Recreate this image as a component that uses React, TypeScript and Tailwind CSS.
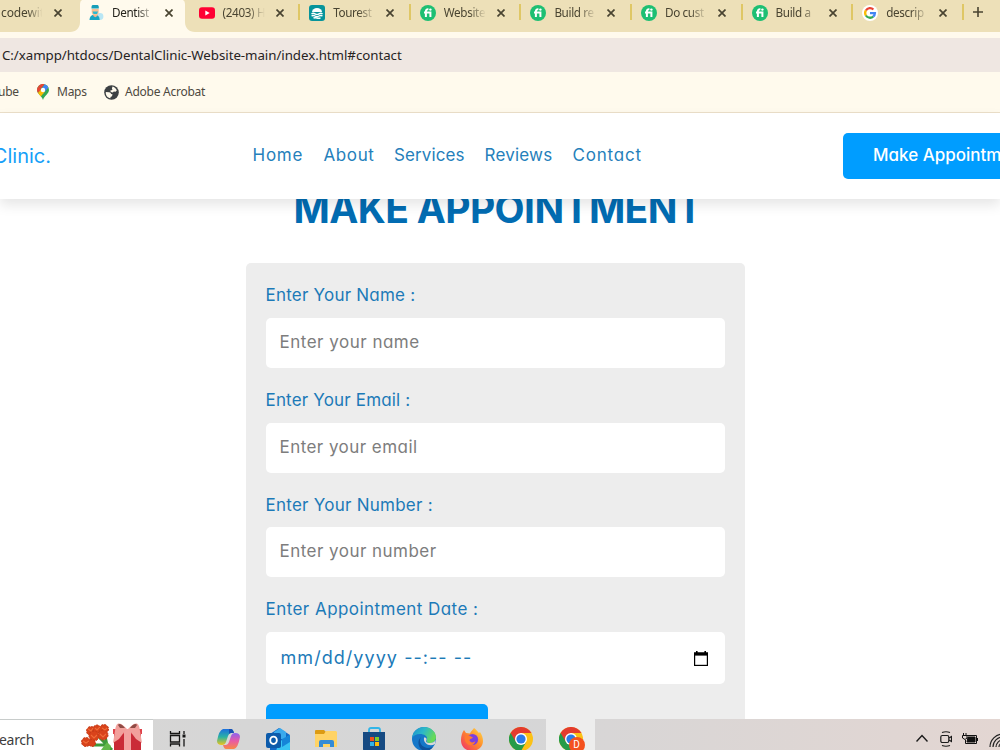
import React from 'react';

const tabs = [
  { icon: 'dentist', title: 'Dentist', active: true },
  { icon: 'youtube', title: '(2403) H', active: false },
  { icon: 'tourest', title: 'Tourest', active: false },
  { icon: 'fiverr', title: 'Website', active: false },
  { icon: 'fiverr', title: 'Build re', active: false },
  { icon: 'fiverr', title: 'Do cust', active: false },
  { icon: 'fiverr', title: 'Build a', active: false },
  { icon: 'google', title: 'descrip', active: false },
];

const fields = [
  { label: 'Enter Your Name :', placeholder: 'Enter your name', labelClass: 'tracking-[0.22px]', inputClass: 'placeholder:tracking-[0.5px]' },
  { label: 'Enter Your Email :', placeholder: 'Enter your email', labelClass: 'tracking-[0.17px]', inputClass: 'placeholder:tracking-[0.45px]' },
  { label: 'Enter Your Number :', placeholder: 'Enter your number', labelClass: 'tracking-[0.25px]', inputClass: 'placeholder:tracking-[0.47px]' },
];

const navLinks = [
  { name: 'Home', className: 'w-[71px] tracking-[0.75px]' },
  { name: 'About', className: 'w-[70.5px] tracking-[0.6px]' },
  { name: 'Services', className: 'w-[90.5px] tracking-[0.1px]' },
  { name: 'Reviews', className: 'w-[88px] tracking-[0.2px]' },
  { name: 'Contact', className: 'w-[70px] tracking-[0.8px]' },
];

const CloseIcon = () => (
  <svg className="w-2 h-2 shrink-0" viewBox="0 0 8 8" fill="none" stroke="currentColor" strokeWidth="1.7">
    <path d="M.5.5l7 7M7.5.5l-7 7" />
  </svg>
);

const GoogleIcon = () => (
  <svg className="w-4 h-4" viewBox="0 0 16 16">
    <circle cx="8" cy="8" r="8" fill="#fff" />
    <g fill="none" strokeWidth="2.3">
      <path d="M3.9 5.5A4.9 4.9 0 0 1 11.4 4.5" stroke="#ea4335" />
      <path d="M3.9 5.4a5 5 0 0 0 0 5.2" stroke="#fbbc05" />
      <path d="M3.9 10.5a4.9 4.9 0 0 0 7.3 1.1" stroke="#34a853" />
      <path d="M8 8.1h4.9a4.8 4.8 0 0 1-1.7 3.5" stroke="#4285f4" />
    </g>
  </svg>
);

const ChromeIcon = () => (
  <svg className="w-6 h-6" viewBox="0 0 24 24">
    <circle cx="12" cy="12" r="12" fill="#fbc116" />
    <path d="M12 12L1.6 6A12 12 0 0 0 12 24l5.2-9z" fill="#259b4a" />
    <path d="M1.6 6A12 12 0 0 1 22.4 6H12l-5 9z" fill="#e33b2e" />
    <circle cx="12" cy="12" r="6" fill="#fff" />
    <circle cx="12" cy="12" r="4.6" fill="#2a7be9" />
  </svg>
);

const Favicon = ({ name }: { name: string }) => {
  if (name === 'dentist') {
    return (
      <svg className="w-4 h-4" viewBox="0 0 16 16">
        <circle cx="12" cy="11.5" r="3.4" fill="#b9e6f4" />
        <path d="M1.5 15c0-3.5 2-5.2 5.2-5.2s5 1.7 5 5.2z" fill="#16a5c4" />
        <path d="M5.3 8h4v3l-2 1.3-2-1.3z" fill="#f3b48b" />
        <path d="M3.7 4h7v2.7a3.5 3.5 0 0 1-7 0z" fill="#f7be94" />
        <path d="M3.5 3.6V2A3.6 2.5 0 0 1 10.8 2v1.6z" fill="#179eb9" />
        <path d="M4.5 6.5h5.5l-1 2.5H5.5z" fill="#2bb9d2" />
      </svg>
    );
  }
  if (name === 'youtube') {
    return (
      <svg className="w-4 h-4" viewBox="0 0 16 16">
        <rect y="2.2" width="16" height="11.6" rx="3" fill="#f03" />
        <path d="M6.3 5.5v5L10.7 8z" fill="#fff" />
      </svg>
    );
  }
  if (name === 'tourest') {
    return (
      <svg className="w-4 h-4" viewBox="0 0 16 16">
        <rect width="16" height="16" rx="3" fill="#07949b" />
        <path d="M3 7a5 4 0 0 1 10 0z" fill="#fff" />
        <g fill="none" stroke="#fff" strokeWidth="1.4">
          <path d="M2.5 8.8c1.3-.8 2.3-.8 3.5 0s2.8.8 4 0 2.3-.8 3.5 0" />
          <path d="M2.5 11c1.3-.8 2.3-.8 3.5 0s2.8.8 4 0 2.3-.8 3.5 0" />
          <path d="M4.5 13c1.2-.5 2.2-.4 3.5 0s2.3.3 3.5 0" />
        </g>
      </svg>
    );
  }
  if (name === 'fiverr') {
    return (
      <svg className="w-4 h-4" viewBox="0 0 16 16">
        <circle cx="8" cy="8" r="8" fill="#1dbf73" />
        <path d="M5.9 12V6.2c0-1.4.7-2 2.5-1.9M4 7.4h6.4V12" fill="none" stroke="#fff" strokeWidth="2" />
        <circle cx="10.4" cy="4.6" r="1.2" fill="#fff" />
      </svg>
    );
  }
  return <GoogleIcon />;
};

const BrowserBar = () => (
  <div className="shrink-0 h-[113px] bg-[#fffaed] border-b border-[#ebdfc9] font-['Noto_Sans','Open_Sans',sans-serif]">
    {/* Tab strip */}
    <div className="h-8 flex bg-[#ede0b8] text-[#494431] overflow-hidden">
      <div className="w-[79px] shrink-0 h-6 mt-px flex items-center pl-px">
        <span className="w-[52.5px] text-[12px] tracking-[-0.1px] whitespace-nowrap [mask-image:linear-gradient(to_right,#000_50%,transparent_78%)]">codewit</span>
        <CloseIcon />
      </div>
      {tabs.map((tab, i) => (
        <div key={i} className="relative w-[110.6px] shrink-0 h-6 mt-px flex items-center pl-[9px]">
          {tab.active && (
            <svg className="absolute -left-[9px] -top-px w-[125px] h-8" viewBox="0 0 125 32">
              <path d="M0 32C6 32 10 28 10 22V4Q10 1 12 0H113Q115 1 115 4V22C115 28 119 32 125 32z" fill="#fffaed" />
            </svg>
          )}
          <span className="relative"><Favicon name={tab.icon} /></span>
          <span className={`relative ml-2 w-[42px] text-[11.7px] tracking-[-0.35px] whitespace-nowrap [mask-image:linear-gradient(to_right,#000_60%,transparent)] ${tab.active ? 'text-[#25231c]' : ''}`}>{tab.title}</span>
          <span className="relative ml-[11px]"><CloseIcon /></span>
          {!tab.active && <span className="absolute right-0 top-[3px] w-0.5 h-4 bg-[#dfc765]" />}
        </div>
      ))}
      <svg className="ml-[9px] mt-[7px] w-[10px] h-[10px] shrink-0" viewBox="0 0 10 10" stroke="#494431" strokeWidth="1.6">
        <path d="M5 0v10M0 5h10" />
      </svg>
    </div>

    {/* Address */}
    <div className="mt-1.5 h-[34px] bg-[#efe7e2] flex items-center pl-0.5 pt-px text-[13.3px] tracking-[-0.05px] text-[#26231f]">
      C:/xampp/htdocs/DentalClinic-Website-main/index.html#contact
    </div>

    {/* Bookmarks */}
    <div className="h-10 flex items-center text-[12px] tracking-[-0.25px] text-[#4d493f]">
      <span className="-ml-0.5 w-[39px] whitespace-nowrap">ube</span>
      <svg className="w-3 h-4" viewBox="0 0 12 16">
        <path d="M6 0a6 6 0 0 0-6 6c0 4 4.5 5 6 10 1.5-5 6-6 6-10a6 6 0 0 0-6-6z" fill="#34a853" />
        <path d="M1.3 2.3A6 6 0 0 1 7.6.2L4 4.6z" fill="#ea4335" />
        <path d="M7.6.2a6 6 0 0 1 3.8 3.2L6 10 4 6z" fill="#4285f4" />
        <path d="M1.3 2.3L4.3 5 1 9A6 6 0 0 1 1.3 2.3z" fill="#ea4335" />
        <path d="M1 9l3.3-4L8 7.6l-4.2 5z" fill="#fbbc04" />
        <circle cx="6" cy="6" r="2.2" fill="#fff" />
      </svg>
      <span className="ml-2 w-[47px]">Maps</span>
      <svg className="w-[15px] h-[15px]" viewBox="0 0 15 15">
        <circle cx="7.5" cy="7.5" r="7.3" fill="#3c4043" />
        <path d="M1.8 7l3.2.2c1.5 0 2 1 2 1.8l1.5.3-.5 2-1.5.7v1.3C3.5 12.8 1.4 10.3 1.8 7zM8.5 1.6c2 .5 3.5 2 4.3 4l-1.3 1.2-1.7-.3-1 1-2-.5-.5-1.5 2.2-.5-.6-1.5z" fill="#fffaed" />
      </svg>
      <span className="ml-1.5">Adobe Acrobat</span>
    </div>
  </div>
);

const Header = () => (
  <header className="relative z-10 shrink-0 h-[86px] bg-white shadow-[0_6px_12px_rgba(0,0,0,0.1)] flex items-center whitespace-nowrap">
    <div className="w-[252.5px] shrink-0 flex">
      <div className="w-[51px] flex justify-end text-[20px] text-[#16a0f8]">Clinic.</div>
    </div>
    <nav className="w-[590.5px] shrink-0 flex text-[17px] text-[#2580bb]">
      {navLinks.map((link) => (
        <a key={link.name} className={link.className}>{link.name}</a>
      ))}
    </nav>
    <button className="shrink-0 h-[46px] rounded-[5px] bg-[#009dff] px-[30px] text-[17px] font-medium text-white">
      Make Appointment
    </button>
  </header>
);

const AppointmentForm = () => (
  <section className="flex-1 min-h-0 overflow-hidden bg-white flex flex-col items-start">
    <h1 className="-mt-4 ml-[293.5px] h-[52px] leading-[52px] whitespace-nowrap text-[39px] font-bold tracking-[-0.62px] text-[#026cb2]">
      MAKE APPOINTMENT
    </h1>
    <form className="ml-[245.5px] mt-7 w-[499.5px] shrink-0 rounded-[5px] bg-[#ededed] p-5 pb-10">
      {fields.map((field) => (
        <div key={field.label} className="mb-5">
          <label className={`block h-[24.8px] leading-[25px] mb-2.5 text-[17px] text-[#1c7ab8] ${field.labelClass}`}>{field.label}</label>
          <input
            type="text"
            className={`block w-full h-[50px] rounded-[5px] bg-white px-[14px] pb-[2px] text-[17px] placeholder:text-[#7d7d7d] outline-none ${field.inputClass}`}
            placeholder={field.placeholder}
          />
        </div>
      ))}
      <label className="block h-[24.8px] leading-[25px] mb-2.5 text-[17px] tracking-[0.45px] text-[#1c7ab8]">Enter Appointment Date :</label>
      <div className="h-[52px] mb-5 rounded-[5px] bg-white pl-[15px] pr-[17px] flex items-center justify-between text-[18px] text-[#1c7ab8]">
        <span className="pb-px whitespace-nowrap tracking-[1.05px]">mm/dd/yyyy --:-- --</span>
        <svg className="w-[14px] h-[15px] mt-px" viewBox="0 0 14 15">
          <path d="M2 0h1.6v1.2h6.8V0H12v1.2h2V15H0V1.2h2z" fill="#000" />
          <path d="M1.2 4.6h11.6v9.2H1.2z" fill="#fff" />
        </svg>
      </div>
      <div className="h-[50px] w-[222px] rounded-[5px] bg-[#009dff]" />
    </form>
  </section>
);

const Taskbar = () => (
  <footer className="shrink-0 h-[31px] overflow-hidden flex bg-linear-to-r from-[#d7d6d5] via-[#d5d6d7] to-[#e3d6d2]">
    {/* Search box */}
    <div className="w-[153px] shrink-0 bg-white border-t border-[#c8cccb] flex text-[14px] text-[#3d3d3d] font-['Noto_Sans',sans-serif]">
      <span className="w-[81px] -ml-px mr-px pt-[10px] leading-5 tracking-[-0.3px]">earch</span>
      <svg className="w-[61px] h-[30px]" viewBox="0 0 61 30">
        <path d="M18 17l13 13M24 16l3 14M12 25h15" stroke="#3d9a3b" strokeWidth="3" />
        <g fill="#d9431b" stroke="#c23a17" strokeWidth="1" strokeDasharray="2 1.5">
          <circle cx="10" cy="11" r="4.5" />
          <circle cx="16" cy="9" r="4" />
          <circle cx="23" cy="9" r="4.5" />
          <circle cx="13" cy="16" r="5" />
          <circle cx="22" cy="15" r="5" />
          <circle cx="5" cy="22" r="4.5" />
          <circle cx="11" cy="23" r="3.5" />
        </g>
        <g fill="none" stroke="#f06b38" strokeWidth="1.1">
          <path d="M7 9l3 2 2-3M14 8l2 2 3-3M21 8l3 2 2-2M10 15l3 3 3-3M19 14l3 3 3-3M2 21l3 2 3-2" />
        </g>
        <path d="M20 30l6-8 4 4-1 4z" fill="#62b84a" />
        <path d="M33 11h27v19H33z" fill="#ca2b37" />
        <path d="M32 9h29v5H32z" fill="#df424b" />
        <path d="M43 9h7v21h-7z" fill="#f3a2a0" />
        <path d="M46 9C38 1 35 2 34 11l-2 12 6-4 6-8zM47 9c8-8 11-7 12 2l2 12-6-4-6-8z" fill="#f2a09c" />
        <path d="M44 8c-3-4-6-5-7-3l2 3zM49 8c3-4 6-5 7-3l-2 3z" fill="#8f4b45" />
      </svg>
    </div>
    <div className="w-[48px] shrink-0 flex justify-center pt-3">
      <svg className="w-[17px] h-[16px]" viewBox="0 0 17 16" fill="none" stroke="#151515" strokeWidth="1.3">
        <path d="M1.5 0v2.5h9V0M1.5 15.5V13h9v2.5M1.5 4.5h9v6.5h-9zM15 0v3M15 8v7.5" />
        <path d="M13.5 3.5h3v3h-3z" fill="#151515" stroke="none" />
      </svg>
    </div>
    <div className="w-[52px] shrink-0 flex justify-center pt-[9px] pl-0.5">
      <svg className="w-[23px] h-[22px]" viewBox="0 0 23 22">
        <defs>
          <linearGradient id="copilotA" x1="0" y1="0" x2="0" y2="1">
            <stop offset="0" stopColor="#1b6fe0" />
            <stop offset=".5" stopColor="#2bb3a3" />
            <stop offset="1" stopColor="#f0c419" />
          </linearGradient>
          <linearGradient id="copilotB" x1="0" y1="0" x2="0" y2="1">
            <stop offset="0" stopColor="#8b61ef" />
            <stop offset=".5" stopColor="#e85aa5" />
            <stop offset="1" stopColor="#f98846" />
          </linearGradient>
        </defs>
        <path d="M6 1h8q2 0 3 4h-3q-2 0-3 3l-2 6q-1 3-4 3-5 0-5-4Q2 2 6 1z" fill="url(#copilotA)" />
        <path d="M17 21H9q-2 0-3-4h3q2 0 3-3l2-6q1-3 4-3 5 0 5 4-2 11-6 12z" fill="url(#copilotB)" />
        <path d="M12 1h2q2 0 3 4h-3q-1 0-2 1z" fill="#174fb1" />
      </svg>
    </div>
    <div className="w-[49px] shrink-0 flex justify-center pt-[8px]">
      <svg className="w-6 h-6" viewBox="0 0 24 24">
        <path d="M4 7l9-6 11 7v16H4z" fill="#1269c7" />
        <path d="M8 5l6-4 6 4v7H8z" fill="#39a9ed" />
        <path d="M13 15l11-7v14q0 2-2 2H10z" fill="#38c3f3" />
        <path d="M16 12l8-4v7l-8 5z" fill="#1584d8" />
        <rect y="6" width="15" height="15" rx="2" fill="#0c5bab" />
        <ellipse cx="7.5" cy="13.3" rx="3.3" ry="3.7" fill="none" stroke="#fff" strokeWidth="1.9" />
      </svg>
    </div>
    <div className="w-[47px] shrink-0 flex justify-center pt-[10px]">
      <svg className="w-[22px] h-[20px]" viewBox="0 0 22 20">
        <path d="M0 2q0-1 1-1h8l2 2v5H0z" fill="#dc9b13" />
        <path d="M0 5h9l2-3h10l1 1v15H0z" fill="#ffd365" />
        <path d="M4 18v-5q0-2 2-2h11q2 0 2 2v5h-4v-3H8v3z" fill="#338bd6" />
      </svg>
    </div>
    <div className="w-[50px] shrink-0 flex justify-center pt-2">
      <svg className="w-6 h-6" viewBox="0 0 24 24">
        <path d="M7 6V3q0-2 2-2h7q2 0 2 2v3" fill="none" stroke="#31b5e8" strokeWidth="1.8" />
        <path d="M1 5h22v17q0 2-2 2H3q-2 0-2-2z" fill="#164a82" />
        <path d="M8 10h4v4H8z" fill="#f1511b" />
        <path d="M13 10h4v4h-4z" fill="#80cc28" />
        <path d="M8 15h4v4H8z" fill="#31b5e8" />
        <path d="M13 15h4v4h-4z" fill="#fbbc09" />
      </svg>
    </div>
    <div className="w-[49px] shrink-0 flex justify-center pt-2">
      <svg className="w-6 h-6" viewBox="0 0 24 24">
        <defs>
          <linearGradient id="edgeTop" x1="0" y1="0" x2="1" y2=".4">
            <stop offset="0" stopColor="#1a8fd0" />
            <stop offset=".5" stopColor="#2cb8c8" />
            <stop offset="1" stopColor="#66da58" />
          </linearGradient>
        </defs>
        <circle cx="12" cy="12" r="12" fill="#1577c9" />
        <path d="M0 11C1 4 6 0 12 0c7 0 12 5 12 10 0 4-3 6-6 6-3 0-4-1-3-3 1-4-3-6-7-6-4 0-7 2-8 4z" fill="url(#edgeTop)" />
        <path d="M9 10c-3 5 1 11 7 11 3 0 4-1 5-1-2 3-5 4-9 4-5-2-8-9-3-14z" fill="#0e539d" />
        <path d="M12 10.5c2-.5 3 1 2.5 2.5-1 2 0 3 3.500 3 2.500 0 4.500-1 5.700-3l-.700 4c-5 3-12 0-11-6.500z" fill="#d7d8d9" />
      </svg>
    </div>
    <div className="w-[48px] shrink-0 flex justify-center pt-2">
      <svg className="w-6 h-6" viewBox="0 0 24 24">
        <defs>
          <linearGradient id="fox" x1="1" y1="0" x2="0" y2="1">
            <stop offset="0" stopColor="#ffe14b" />
            <stop offset=".45" stopColor="#ff8a2b" />
            <stop offset="1" stopColor="#ef2b6c" />
          </linearGradient>
        </defs>
        <path d="M1 13C1 9 2 6 4 3l2 3 4 .5C11 4 13 3 14 1c2 1 3 3 5 5l1-1c2 3 3 6 3 9 0 6-5 10-11 10S1 20 1 13z" fill="url(#fox)" />
        <circle cx="12.5" cy="12.5" r="5.6" fill="#7b3fe0" />
        <path d="M5 9c2-1 4-1 6 .5l2 1c-1 1.500-3 1-3.500 2.500.5 3 4 3 6 1-1 4-4.500 5-7.500 3.500-3-2-4-5-3-8.500z" fill="#ff7a30" />
      </svg>
    </div>
    <div className="w-[50px] shrink-0 flex justify-center pt-2"><ChromeIcon /></div>
    <div className="w-[49px] shrink-0 flex justify-center pt-2 bg-[#ededed]">
      <div className="relative">
        <ChromeIcon />
        <span className="absolute left-[10px] top-[10px] w-4 h-4 rounded-full bg-[#f4511e] text-white text-[10px] leading-4 text-center font-['Roboto',sans-serif]">D</span>
      </div>
    </div>
    {/* System tray */}
    <div className="ml-auto flex shrink-0">
      <svg className="mt-[15px] w-3 h-[9px]" viewBox="0 0 12 9" fill="none" stroke="#1a1a1a" strokeWidth="1.4">
        <path d="M.5 7.5L6 1.5l5.5 6" />
      </svg>
      <svg className="ml-3 mt-3 w-3 h-4" viewBox="0 0 12 16" fill="none" stroke="#1a1a1a" strokeWidth="1.2">
        <path d="M2 1.5q4-1.5 8 0M2 14.5q4 1.5 8 0M9 7l2.5-1.5v5L9 9" />
        <rect x=".8" y="4.5" width="8" height="7" rx="1.5" />
      </svg>
      <svg className="ml-[10px] mt-3.5 w-4 h-3" viewBox="0 0 16 12" fill="none" stroke="#111" strokeWidth="1">
        <path d="M5 2.5h9.5v8H3.5V7M1.5 0v2.5M4 0v2.5M.5 2.5h4.5v2.5L3 6.5.5 5zM15.5 5v3" />
        <path d="M6 4h7v5H5z" fill="#111" />
      </svg>
      <div className="ml-[11px] w-[11px] overflow-hidden pt-3.5">
        <svg className="w-4 h-4" viewBox="0 0 16 16" fill="none" stroke="#222" strokeWidth="1.2">
          <path d="M1 14A13 13 0 0 1 14 1M4 14A10 10 0 0 1 14 4M7 14a7 7 0 0 1 7-7M10 14a4 4 0 0 1 4-4" />
        </svg>
      </div>
    </div>
  </footer>
);

const App = () => {
  return (
    <div className="w-[1000px] h-[750px] overflow-hidden flex flex-col bg-white font-['Inter',sans-serif] [font-feature-settings:'cv11']">
      <BrowserBar />
      <Header />
      <AppointmentForm />
      <Taskbar />
    </div>
  );
};

export default App;
